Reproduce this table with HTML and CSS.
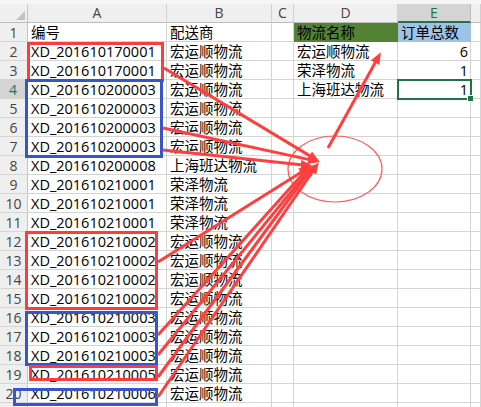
FILE: index.html
```html
<!DOCTYPE html>
<html lang="zh">
<head>
<meta charset="utf-8">
<title>物流订单统计</title>
<link rel="stylesheet" href="styles.css">
</head>
<body>
<div class="wrap">
  <div class="strip"></div>
  <div class="sheet">
    <div class="corner"><span class="tri"></span></div>
    <div class="ch">A</div><div class="ch">B</div><div class="ch">C</div><div class="ch">D</div><div class="ch ch-sel">E</div><div class="ch"></div>

    <div class="rh">1</div><div class="c">编号</div><div class="c">配送商</div><div class="c"></div><div class="c d1">物流名称</div><div class="c e1">订单总数</div><div class="c"></div>
    <div class="rh">2</div><div class="c">XD_201610170001</div><div class="c">宏运顺物流</div><div class="c"></div><div class="c">宏运顺物流</div><div class="c num">6</div><div class="c"></div>
    <div class="rh">3</div><div class="c">XD_201610170001</div><div class="c">宏运顺物流</div><div class="c"></div><div class="c">荣泽物流</div><div class="c num">1</div><div class="c"></div>
    <div class="rh rh-sel">4</div><div class="c">XD_201610200003</div><div class="c">宏运顺物流</div><div class="c"></div><div class="c">上海班达物流</div><div class="c num sel">1<span class="handle"></span></div><div class="c"></div>
    <div class="rh">5</div><div class="c">XD_201610200003</div><div class="c">宏运顺物流</div><div class="c"></div><div class="c"></div><div class="c"></div><div class="c"></div>
    <div class="rh">6</div><div class="c">XD_201610200003</div><div class="c">宏运顺物流</div><div class="c"></div><div class="c"></div><div class="c"></div><div class="c"></div>
    <div class="rh">7</div><div class="c">XD_201610200003</div><div class="c">宏运顺物流</div><div class="c"></div><div class="c"></div><div class="c"></div><div class="c"></div>
    <div class="rh">8</div><div class="c">XD_201610200008</div><div class="c">上海班达物流</div><div class="c"></div><div class="c"></div><div class="c"></div><div class="c"></div>
    <div class="rh">9</div><div class="c">XD_201610210001</div><div class="c">荣泽物流</div><div class="c"></div><div class="c"></div><div class="c"></div><div class="c"></div>
    <div class="rh">10</div><div class="c">XD_201610210001</div><div class="c">荣泽物流</div><div class="c"></div><div class="c"></div><div class="c"></div><div class="c"></div>
    <div class="rh">11</div><div class="c">XD_201610210001</div><div class="c">荣泽物流</div><div class="c"></div><div class="c"></div><div class="c"></div><div class="c"></div>
    <div class="rh">12</div><div class="c">XD_201610210002</div><div class="c">宏运顺物流</div><div class="c"></div><div class="c"></div><div class="c"></div><div class="c"></div>
    <div class="rh">13</div><div class="c">XD_201610210002</div><div class="c">宏运顺物流</div><div class="c"></div><div class="c"></div><div class="c"></div><div class="c"></div>
    <div class="rh">14</div><div class="c">XD_201610210002</div><div class="c">宏运顺物流</div><div class="c"></div><div class="c"></div><div class="c"></div><div class="c"></div>
    <div class="rh">15</div><div class="c">XD_201610210002</div><div class="c">宏运顺物流</div><div class="c"></div><div class="c"></div><div class="c"></div><div class="c"></div>
    <div class="rh">16</div><div class="c">XD_201610210003</div><div class="c">宏运顺物流</div><div class="c"></div><div class="c"></div><div class="c"></div><div class="c"></div>
    <div class="rh">17</div><div class="c">XD_201610210003</div><div class="c">宏运顺物流</div><div class="c"></div><div class="c"></div><div class="c"></div><div class="c"></div>
    <div class="rh">18</div><div class="c">XD_201610210003</div><div class="c">宏运顺物流</div><div class="c"></div><div class="c"></div><div class="c"></div><div class="c"></div>
    <div class="rh">19</div><div class="c">XD_201610210005</div><div class="c">宏运顺物流</div><div class="c"></div><div class="c"></div><div class="c"></div><div class="c"></div>
    <div class="rh">20</div><div class="c">XD_201610210006</div><div class="c">宏运顺物流</div><div class="c"></div><div class="c"></div><div class="c"></div><div class="c"></div>
    <div class="rh"></div><div class="c"></div><div class="c"></div><div class="c"></div><div class="c"></div><div class="c"></div><div class="c"></div>
  </div>

  <svg class="marks" width="481" height="407" viewBox="0 0 481 407" xmlns="http://www.w3.org/2000/svg">
    <defs>
      <marker id="ah" viewBox="0 0 10 8" markerWidth="4" markerHeight="3.2" refX="6" refY="4" orient="auto" markerUnits="strokeWidth">
        <path d="M0,0 L10,4 L0,8 z" fill="#ff3f3f"/>
      </marker>
    </defs>
    <g fill="none" stroke-width="3">
      <rect x="28.5" y="43.5" width="134" height="37" stroke="#ff3b3b"/>
      <rect x="26.5" y="80.5" width="135" height="76" stroke="#3a55c9"/>
      <rect x="26.5" y="232.5" width="130" height="76" stroke="#ff3b3b"/>
      <rect x="26.5" y="312.5" width="130" height="52" stroke="#3a55c9"/>
      <rect x="30.5" y="366.5" width="126" height="13" stroke="#ff3b3b"/>
      <rect x="14.5" y="389.5" width="142" height="15" stroke="#3a55c9"/>
    </g>
    <ellipse cx="335" cy="169" rx="47" ry="33" fill="none" stroke="#ff5a5a" stroke-width="1.2"/>
    <g stroke="#ff3f3f" stroke-width="3" marker-end="url(#ah)">
      <line x1="164" y1="68" x2="315.7" y2="159.4"/>
      <line x1="163" y1="128" x2="315.1" y2="160.9"/>
      <line x1="163" y1="150" x2="308" y2="165.5"/>
      <line x1="158" y1="262" x2="306.8" y2="168.7"/>
      <line x1="158" y1="335" x2="305.7" y2="170.7"/>
      <line x1="158" y1="355" x2="309.8" y2="168.9"/>
      <line x1="158" y1="377" x2="312" y2="168"/>
      <line x1="158" y1="397" x2="316.2" y2="166.1"/>
      <line x1="328" y1="148" x2="378.6" y2="56.4"/>
    </g>
  </svg>
</div>
</body>
</html>
```

FILE: styles.css
```css
html, body {
  margin: 0;
  padding: 0;
  background: #ffffff;
}

.wrap {
  position: relative;
  width: 481px;
  height: 407px;
  overflow: hidden;
}

.strip {
  height: 4px;
  background: #f6f6f6;
}

.sheet {
  display: grid;
  grid-template-columns: 28px 139px 105px 22px 104px 73px 10px;
  grid-auto-rows: 19px;
  font-family: "Open Sans", "Noto Sans CJK SC", sans-serif;
}

.corner {
  position: relative;
  background: #efefef;
  border-right: 1px solid #c4c4c4;
  border-bottom: 1px solid #bdbdbd;
  box-sizing: border-box;
}

.tri {
  position: absolute;
  right: 2px;
  bottom: 2px;
  width: 0;
  height: 0;
  border-left: 9px solid transparent;
  border-bottom: 9px solid #c2c2c2;
}

.ch {
  box-sizing: border-box;
  background: #efefef;
  border-right: 1px solid #d0d0d0;
  border-bottom: 1px solid #bdbdbd;
  color: #444444;
  font-size: 14px;
  line-height: 18px;
  text-align: center;
}

.ch-sel {
  background: #d4d4d4;
  color: #217346;
  border-bottom: 2px solid #217346;
  border-right-color: #bdbdbd;
}

.rh {
  box-sizing: border-box;
  background: #efefef;
  border-right: 1px solid #c4c4c4;
  border-bottom: 1px solid #d6d6d6;
  color: #444444;
  font-size: 14px;
  line-height: 19px;
  text-align: center;
}

.rh-sel {
  background: #d4d4d4;
  color: #217346;
  border-right: 2px solid #217346;
}

.c {
  box-sizing: border-box;
  border-right: 1px solid #d4d4d4;
  border-bottom: 1px solid #d4d4d4;
  color: #000000;
  font-size: 14.5px;
  line-height: 19px;
  padding: 0 3px;
  white-space: nowrap;
  overflow: visible;
}

.num {
  text-align: right;
  padding-right: 2px;
}

.d1 {
  background: #548235;
  border-color: #548235;
}

.e1 {
  background: #9dc3e6;
  border-color: #9dc3e6;
}

.sel {
  position: relative;
  outline: 2px solid #217346;
  outline-offset: -1px;
}

.handle {
  position: absolute;
  right: -4px;
  bottom: -4px;
  width: 5px;
  height: 5px;
  background: #217346;
  border: 1px solid #ffffff;
}

.marks {
  position: absolute;
  left: 0;
  top: 0;
  pointer-events: none;
}
```
